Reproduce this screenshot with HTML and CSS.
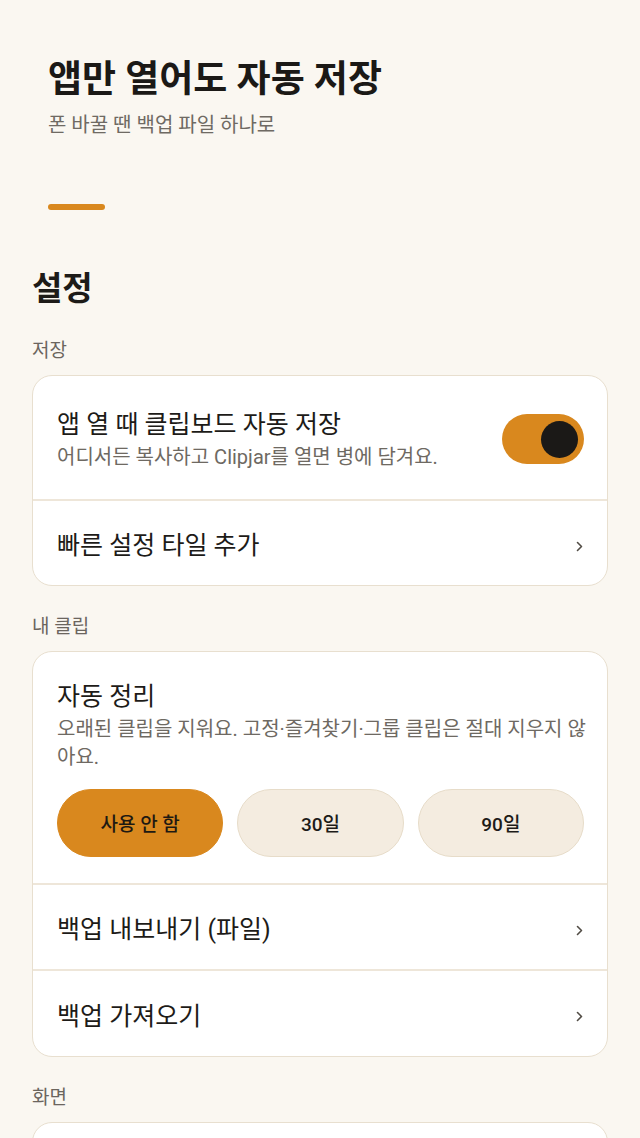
FILE: index.html
```html
<!DOCTYPE html>
<html lang="ko">
<head>
<meta charset="utf-8">
<meta name="viewport" content="width=device-width, initial-scale=1">
<title>설정</title>
<link rel="stylesheet" href="styles.css">
</head>
<body>
<div class="page">
  <header class="hero">
    <h1 class="hero-title">앱만 열어도 자동 저장</h1>
    <p class="hero-sub">폰 바꿀 땐 백업 파일 하나로</p>
    <div class="hero-bar"></div>
  </header>

  <main class="settings">
    <h2 class="settings-title">설정</h2>

    <div class="group-label">저장</div>
    <section class="card">
      <div class="row row-toggle">
        <div class="row-text">
          <div class="row-title">앱 열 때 클립보드 자동 저장</div>
          <div class="row-desc">어디서든 복사하고 Clipjar를 열면 병에 담겨요.</div>
        </div>
        <div class="toggle is-on" role="switch" aria-checked="true"><span class="toggle-knob"></span></div>
      </div>
      <div class="row row-link">
        <div class="row-title">빠른 설정 타일 추가</div>
        <svg class="chev" width="7" height="11" viewBox="0 0 7 11"><polyline points="1.5,1.5 5.5,5.5 1.5,9.5" fill="none" stroke="#514c45" stroke-width="1.6" stroke-linecap="round" stroke-linejoin="round"/></svg>
      </div>
    </section>

    <div class="group-label">내 클립</div>
    <section class="card">
      <div class="row row-block">
        <div class="row-title">자동 정리</div>
        <div class="row-desc row-desc-wide">오래된 클립을 지워요. 고정·즐겨찾기·그룹 클립은 절대 지우지 않아요.</div>
        <div class="choices">
          <button class="choice is-selected">사용 안 함</button>
          <button class="choice">30일</button>
          <button class="choice">90일</button>
        </div>
      </div>
      <div class="row row-link">
        <div class="row-title">백업 내보내기 (파일)</div>
        <svg class="chev" width="7" height="11" viewBox="0 0 7 11"><polyline points="1.5,1.5 5.5,5.5 1.5,9.5" fill="none" stroke="#514c45" stroke-width="1.6" stroke-linecap="round" stroke-linejoin="round"/></svg>
      </div>
      <div class="row row-link">
        <div class="row-title">백업 가져오기</div>
        <svg class="chev" width="7" height="11" viewBox="0 0 7 11"><polyline points="1.5,1.5 5.5,5.5 1.5,9.5" fill="none" stroke="#514c45" stroke-width="1.6" stroke-linecap="round" stroke-linejoin="round"/></svg>
      </div>
    </section>

    <div class="group-label">화면</div>
    <section class="card card-empty"></section>
  </main>
</div>
</body>
</html>
```

FILE: styles.css
```css
* { box-sizing: border-box; }

html, body {
  margin: 0;
  padding: 0;
  background: #faf7f1;
}

body {
  font-family: Roboto, "Noto Sans CJK KR", sans-serif;
  color: #1d1b18;
  -webkit-font-smoothing: antialiased;
}

.page {
  width: 640px;
  min-height: 1138px;
  overflow: hidden;
}

.hero {
  padding: 56px 48px 0;
}

.hero-title {
  margin: 0;
  font-size: 37px;
  line-height: 48px;
  font-weight: 700;
  color: #1b1916;
}

.hero-sub {
  margin: 7px 0 0;
  font-size: 20px;
  line-height: 28px;
  color: #6f6a63;
}

.hero-bar {
  margin-top: 64.5px;
  width: 57px;
  height: 6px;
  border-radius: 3px;
  background: #d9881e;
}

.settings {
  padding: 0 32px 40px;
}

.settings-title {
  margin: 58.5px 0 0;
  font-size: 33px;
  line-height: 42px;
  font-weight: 700;
  color: #1d1b18;
}

.group-label {
  margin-top: 28px;
  margin-bottom: 11px;
  font-size: 19px;
  line-height: 26px;
  color: #6b655e;
}

.card {
  background: #ffffff;
  border: 1.5px solid #e8dfcf;
  border-radius: 20px;
  overflow: hidden;
}

.card-empty {
  height: 86px;
}

.row {
  padding: 0 23px 0 24px;
}

.row + .row {
  border-top: 2px solid #eee6d9;
}

.row-toggle {
  display: flex;
  align-items: center;
  justify-content: space-between;
  padding-top: 31.5px;
  padding-bottom: 28px;
}

.row-link {
  display: flex;
  align-items: center;
  justify-content: space-between;
  padding-top: 28.5px;
  padding-bottom: 22px;
}

.row-block {
  padding-top: 27.5px;
  padding-bottom: 26px;
}

.row-title {
  font-size: 25px;
  line-height: 34px;
  color: #1d1b18;
}

.row-desc {
  margin-top: 1px;
  font-size: 20px;
  line-height: 28px;
  color: #6e6962;
}

.row-desc-wide {
  margin-right: -4px;
}

.chev {
  display: block;
  margin-right: 1px;
  flex: none;
}

.toggle {
  position: relative;
  flex: none;
  width: 82px;
  height: 50px;
  border-radius: 25px;
  background: #d9881e;
}

.toggle-knob {
  position: absolute;
  top: 6.5px;
  right: 6px;
  width: 37px;
  height: 37px;
  border-radius: 50%;
  background: #1b1917;
}

.choices {
  margin-top: 18px;
  display: grid;
  grid-template-columns: repeat(3, 1fr);
  gap: 14px;
}

.choice {
  height: 68px;
  border-radius: 34px;
  border: 1.5px solid #e7dcc9;
  background: #f4ece0;
  font-family: Roboto, "Noto Sans CJK KR", sans-serif;
  font-size: 19px;
  font-weight: 500;
  color: #1d1b18;
  padding: 0;
}

.choice.is-selected {
  background: #d9881e;
  border-color: #d9881e;
  color: #1e1912;
}
```
